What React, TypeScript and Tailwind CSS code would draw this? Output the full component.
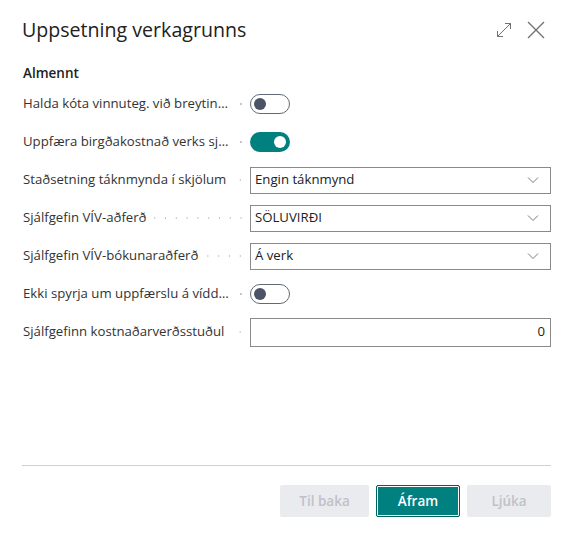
import React from "react";

const font = { fontFamily: '"Open Sans", "Noto Sans", sans-serif' };

function Leader() {
  return (
    <div className="flex-1 h-[2px] min-w-[4px] ml-[6px] mr-[4px] bg-[radial-gradient(circle,#c4c4c4_0.9px,transparent_1.1px)] bg-[length:10.8px_2px] bg-right bg-repeat-x" />
  );
}

function Toggle({ on }: { on: boolean }) {
  return on ? (
    <div className="w-[40px] h-[20px] rounded-full bg-[#00807f] flex items-center justify-end pr-[4px]">
      <div className="w-[12px] h-[12px] rounded-full bg-white" />
    </div>
  ) : (
    <div className="w-[40px] h-[20px] rounded-full border border-[#5f6a79] flex items-center pl-[3px]">
      <div className="w-[12px] h-[12px] rounded-full bg-[#4b5466]" />
    </div>
  );
}

function Chevron() {
  return (
    <svg width="12" height="8" viewBox="0 0 12 8" className="shrink-0">
      <polyline points="1,1.5 6,6.5 11,1.5" fill="none" stroke="#7a7a7a" strokeWidth="1" />
    </svg>
  );
}

function Select({ value }: { value: string }) {
  return (
    <div className="w-full h-[27px] border border-[#8a8a8a] flex items-center pl-[4px] pr-[11px] text-[13.2px] text-[#212121]">
      <span className="flex-1 truncate">{value}</span>
      <Chevron />
    </div>
  );
}

function Row({ label, children }: { label: string; children: React.ReactNode }) {
  return (
    <div className="h-[38px] flex items-center">
      <div className="w-[227px] flex items-center min-w-0">
        <span className="truncate max-w-[206px] text-[13.2px] text-[#333333] shrink">{label}</span>
        <Leader />
      </div>
      <div className="flex-1 flex items-center">{children}</div>
    </div>
  );
}

export default function App() {
  return (
    <div className="min-h-screen bg-white flex flex-col" style={font}>
      <div className="h-[59px] flex items-center px-[22px]">
        <h1 className="flex-1 text-[19.6px] text-[#212121] font-medium">Uppsetning verkagrunns</h1>
        <div className="flex items-center gap-[15px] mr-[6px]">
          <svg width="16" height="16" viewBox="0 0 16 16">
            <g fill="none" stroke="#707070" strokeWidth="1">
              <line x1="1.5" y1="14.5" x2="14.5" y2="1.5" />
              <polyline points="9,1.5 14.5,1.5 14.5,7" />
              <polyline points="1.5,9 1.5,14.5 7,14.5" />
            </g>
          </svg>
          <svg width="18" height="18" viewBox="0 0 18 18">
            <g fill="none" stroke="#707070" strokeWidth="1.3">
              <line x1="1" y1="1" x2="17" y2="17" />
              <line x1="17" y1="1" x2="1" y2="17" />
            </g>
          </svg>
        </div>
      </div>
      <div className="px-[22px] pl-[23px]">
        <div className="h-[24px] mt-[2px] flex items-center text-[13.5px] font-semibold text-[#212121]">Almennt</div>
        <Row label="Halda kóta vinnuteg. við breytingu">
          <Toggle on={false} />
        </Row>
        <Row label="Uppfæra birgðakostnað verks sjálfkrafa">
          <Toggle on={true} />
        </Row>
        <Row label="Staðsetning táknmynda í skjölum">
          <Select value="Engin táknmynd" />
        </Row>
        <Row label="Sjálfgefin VÍV-aðferð">
          <Select value="SÖLUVIRÐI" />
        </Row>
        <Row label="Sjálfgefin VÍV-bókunaraðferð">
          <Select value="Á verk" />
        </Row>
        <Row label="Ekki spyrja um uppfærslu á víddum">
          <Toggle on={false} />
        </Row>
        <Row label="Sjálfgefinn kostnaðarverðsstuðul">
          <div className="w-full h-[29px] border border-[#8a8a8a] flex items-center justify-end pr-[5px] text-[13.2px] text-[#212121]">0</div>
        </Row>
      </div>
      <div className="flex-1" />
      <div className="mx-[22px] border-t border-[#d0d0d0] pt-[19px] pb-[19px] flex justify-end gap-[7px]">
        <button className="w-[89px] h-[32px] rounded-[2px] bg-[#eaebee] text-[13.5px] font-semibold text-[#bfc1c8]">Til baka</button>
        <button className="w-[84px] h-[32px] rounded-[2px] bg-[#00807f] border border-[#00605f] shadow-[inset_0_0_0_1px_#ffffff] text-[13.5px] font-semibold text-white">Áfram</button>
        <button className="w-[84px] h-[32px] rounded-[2px] bg-[#eaebee] text-[13.5px] font-semibold text-[#bfc1c8]">Ljúka</button>
      </div>
    </div>
  );
}
